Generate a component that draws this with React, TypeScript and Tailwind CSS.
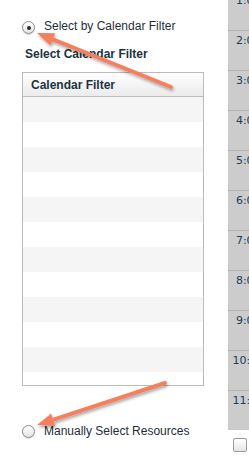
import React from "react";

const hours = ["1:00 AM", "2:00 AM", "3:00 AM", "4:00 AM", "5:00 AM", "6:00 AM", "7:00 AM", "8:00 AM", "9:00 AM", "10:00 AM", "11:00 AM"];

function Radio({ checked }: { checked?: boolean }) {
  return (
    <span className="w-[13px] h-[13px] shrink-0 rounded-full border border-[#8c8c8c] bg-gradient-to-b from-white to-[#e4e4e4] shadow-[0_1px_1px_rgba(0,0,0,0.15)] flex items-center justify-center">
      {checked && <span className="w-[4px] h-[4px] rounded-full bg-[#2b2b2b]" />}
    </span>
  );
}

// arrow polygon from tail to tip
function Arrow({ tail, tip }: { tail: [number, number]; tip: [number, number] }) {
  const dx = tip[0] - tail[0];
  const dy = tip[1] - tail[1];
  const len = Math.hypot(dx, dy);
  const ux = dx / len;
  const uy = dy / len;
  const nx = -uy;
  const ny = ux;
  const headLen = 17;
  const headW = 6.5;
  const bx = tip[0] - ux * headLen;
  const by = tip[1] - uy * headLen;
  const pts = [
    [tip[0], tip[1]],
    [bx + nx * headW, by + ny * headW],
    [bx - nx * headW, by - ny * headW],
  ]
    .map((p) => p.join(","))
    .join(" ");
  return (
    <g filter="url(#shadow)">
      <line x1={tail[0]} y1={tail[1]} x2={bx + ux * 2} y2={by + uy * 2} stroke="#f4805e" strokeWidth={4} strokeLinecap="round" />
      <polygon points={pts} fill="#f4805e" />
    </g>
  );
}

export default function App() {
  return (
    <div className="relative w-[249px] h-[456px] overflow-hidden bg-white flex font-['Liberation_Sans',Arial,sans-serif]">
      {/* left panel */}
      <div className="w-[228px] shrink-0 pl-[22px] pt-[18px]">
        <div className="flex items-start h-4">
          <span className="mt-[3px]">
            <Radio checked />
          </span>
          <span className="ml-[9px] text-[12px] leading-4 text-[#1e2e38]">Select by Calendar Filter</span>
        </div>

        <div className="mt-[12px] pl-[3px] text-[12px] leading-4 font-bold text-[#1c3442]">Select Calendar Filter</div>

        <div className="mt-[10px] w-[182px] border border-[#bcbcbc]">
          <div className="h-[24px] flex items-center pl-2 border-b border-[#bcbcbc] bg-gradient-to-b from-white to-[#ebebeb] text-[12px] font-bold text-[#1c3442]">
            Calendar Filter
          </div>
          <div className="h-[288px] overflow-hidden">
            {Array.from({ length: 12 }).map((_, i) => (
              <div key={i} className={i % 2 === 0 ? "h-[25px] bg-[#f5f5f5]" : "h-[25px] bg-white"} />
            ))}
          </div>
        </div>

        <div className="mt-[37px] flex items-start h-4">
          <span className="mt-[2px]">
            <Radio />
          </span>
          <span className="ml-[9px] text-[12px] leading-4 text-[#1e2e38]">Manually Select Resources</span>
        </div>
      </div>

      {/* time column */}
      <div className="flex-1 flex flex-col">
        <div className="h-[430px] overflow-hidden bg-[#cccccc]">
          <div className="-mt-[10px] w-[61px]">
            {hours.map((h, i) => (
              <div
                key={h}
                className={
                  i === 0
                    ? "h-[40px] pt-[4px] text-center font-['DejaVu_Sans',Verdana,sans-serif] text-[11px] leading-[13px] text-[#213c55] whitespace-nowrap"
                    : "h-[40px] pt-[3px] border-t border-[#b3b3b3] text-center font-['DejaVu_Sans',Verdana,sans-serif] text-[11px] leading-[13px] text-[#213c55] whitespace-nowrap"
                }
              >
                {h}
              </div>
            ))}
          </div>
        </div>
        <div className="mt-[8px] ml-[5px] w-[14px] h-[14px] rounded-[2px] border border-[#9a9a9a] bg-gradient-to-b from-white to-[#e6e6e6]" />
      </div>

      {/* annotation arrows */}
      <svg className="absolute inset-0 w-full h-full pointer-events-none" viewBox="0 0 249 456">
        <defs>
          <filter id="shadow" x="-20%" y="-50%" width="140%" height="200%">
            <feDropShadow dx="1" dy="2" stdDeviation="1.5" floodColor="#000" floodOpacity="0.35" />
          </filter>
        </defs>
        <Arrow tail={[171, 87]} tip={[37, 33]} />
        <Arrow tail={[165, 383]} tip={[37, 425]} />
      </svg>
    </div>
  );
}
